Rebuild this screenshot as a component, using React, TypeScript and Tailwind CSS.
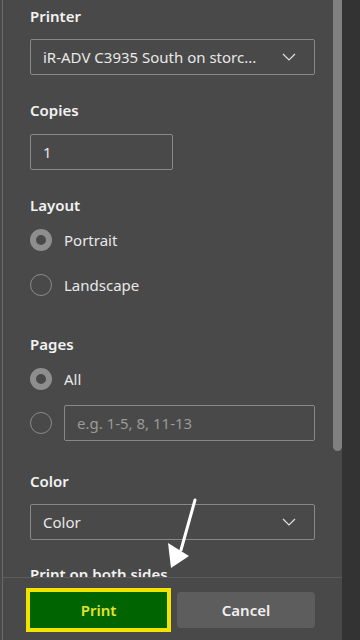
import React from "react";

const font = { fontFamily: '"Segoe UI", "Noto Sans", "Open Sans", sans-serif' };

function Chevron() {
  return (
    <svg width="14" height="8" viewBox="0 0 14 8" fill="none">
      <path d="M1 1 L7 7 L13 1" stroke="#e0e0e0" strokeWidth="1.2" />
    </svg>
  );
}

function Radio({ checked }: { checked?: boolean }) {
  return checked ? (
    <div className="w-[22px] h-[22px] rounded-full border-[6px] border-[#8e8e8e] bg-[#494949] shrink-0" />
  ) : (
    <div className="w-[22px] h-[22px] rounded-full border-[1.5px] border-[#8a8a8a] shrink-0" />
  );
}

function Label({ children, className = "" }: { children: React.ReactNode; className?: string }) {
  return (
    <div className={"h-[20px] leading-[20px] text-[15px] font-semibold text-[#f2f2f2] shrink-0 " + className}>
      {children}
    </div>
  );
}

function Select({ text, className = "" }: { text: string; className?: string }) {
  return (
    <div
      className={
        "h-[36px] shrink-0 w-[285px] border border-[#888] rounded-[2px] flex items-center justify-between pl-[12px] pr-[18px] text-[15px] text-[#e8e8e8] " +
        className
      }
    >
      <span className="whitespace-nowrap">{text}</span>
      <Chevron />
    </div>
  );
}

export default function App() {
  return (
    <div className="w-[360px] h-[640px] flex bg-[#333333] overflow-hidden relative" style={font}>
      <div className="w-[342px] h-full flex bg-[#494949]">
        <div className="w-[2px]" />
        <div className="w-px bg-[#6a6a6a]" />
        <div className="flex-1 flex flex-col">
          <div className="h-[577px] shrink-0 flex overflow-hidden">
            <div className="flex-1 pl-[27px] pr-[18px] pt-[6px] flex flex-col">
              <Label>Printer</Label>
              <Select text="iR-ADV C3935 South on storc..." className="mt-[13px]" />

              <Label className="mt-[25px]">Copies</Label>
              <div className="mt-[14px] shrink-0 h-[36px] w-[143px] border border-[#888] rounded-[2px] flex items-center pl-[12px] text-[15px] text-[#e8e8e8]">
                1
              </div>

              <Label className="mt-[25px]">Layout</Label>
              <div className="mt-[14px] shrink-0 h-[22px] flex items-center gap-[12px]">
                <Radio checked />
                <span className="text-[15px] text-[#e8e8e8]">Portrait</span>
              </div>
              <div className="mt-[23px] shrink-0 h-[22px] flex items-center gap-[12px]">
                <Radio />
                <span className="text-[15px] text-[#e8e8e8]">Landscape</span>
              </div>

              <Label className="mt-[38px]">Pages</Label>
              <div className="mt-[14px] shrink-0 h-[22px] flex items-center gap-[12px]">
                <Radio checked />
                <span className="text-[15px] text-[#e8e8e8]">All</span>
              </div>
              <div className="mt-[15px] shrink-0 h-[36px] flex items-center gap-[12px]">
                <Radio />
                <div className="h-[36px] flex-1 border border-[#888] rounded-[2px] flex items-center pl-[12px] text-[15px] text-[#9a9a9a]">
                  e.g. 1-5, 8, 11-13
                </div>
              </div>

              <Label className="mt-[30px]">Color</Label>
              <Select text="Color" className="mt-[13px]" />

              <Label className="mt-[24px]">Print on both sides</Label>
            </div>
            <div className="w-[9px]">
              <div className="h-[451px] bg-[#808080] rounded-b-[5px]" />
            </div>
          </div>
          <div className="flex-1 border-t border-[#5c5c5c] pt-[14px] pl-[27px] flex gap-[10px] items-start">
            <button className="w-[137px] h-[36px] bg-[#006400] outline-[4px] outline-solid outline-[#f0e400] text-[15px] font-semibold text-[#e4e42a]">
              Print
            </button>
            <button className="w-[138px] h-[36px] bg-[#5d5d5d] rounded-[4px] text-[15px] font-semibold text-[#f0f0f0]">
              Cancel
            </button>
          </div>
        </div>
      </div>
      <svg className="absolute left-0 top-0 pointer-events-none" width="360" height="640" viewBox="0 0 360 640">
        <line x1="195" y1="500" x2="181" y2="550" stroke="#ffffff" strokeWidth="3" strokeLinecap="round" />
        <polygon points="171,568 168,543 189,556" fill="#ffffff" />
      </svg>
    </div>
  );
}
